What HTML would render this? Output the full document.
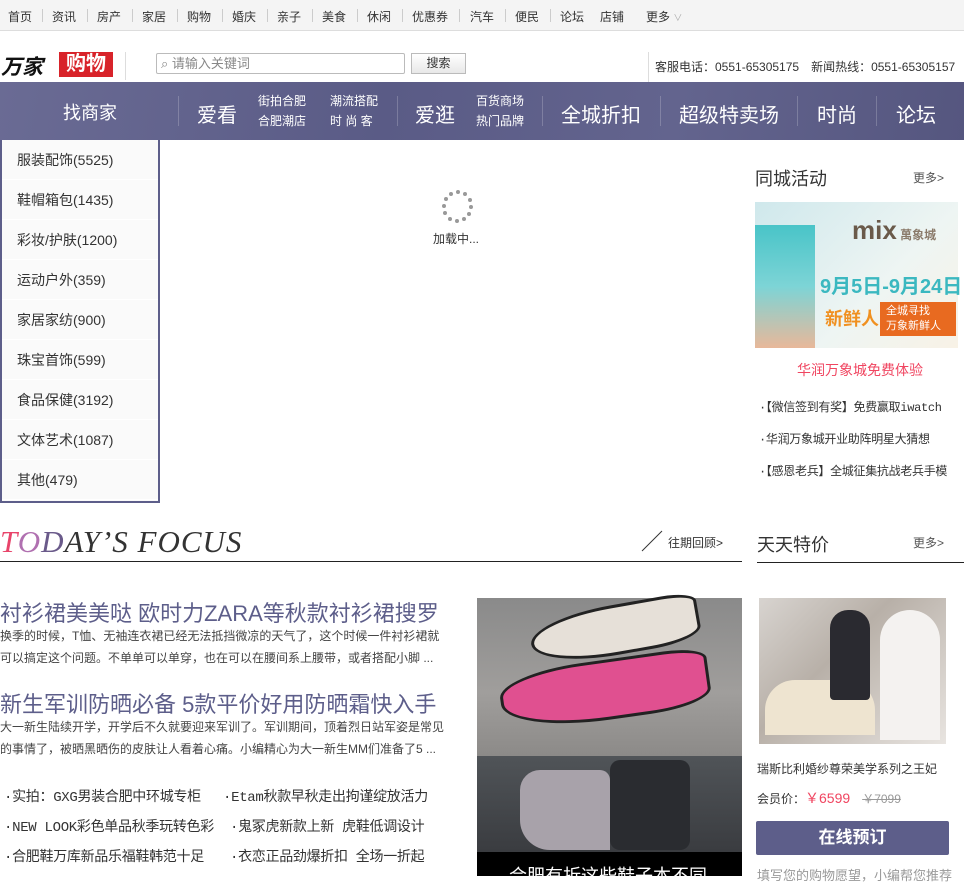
<!DOCTYPE html>
<html><head><meta charset="utf-8"><style>
*{margin:0;padding:0;box-sizing:border-box}
body{width:964px;height:876px;overflow:hidden;background:#fff;font-family:"Liberation Sans","Noto Sans CJK SC",sans-serif;color:#333;position:relative}
.a{position:absolute;white-space:nowrap}
.top{left:0;top:0;width:964px;height:31px;background:#f4f4f4;border-bottom:1px solid #ddd;font-size:12px;color:#333}
.top span{position:absolute;top:8px}
.sep{position:absolute;top:9px;width:1px;height:13px;background:#ccc}
.nav{left:0;top:82px;width:964px;height:58px;background:linear-gradient(100deg,#6a6b94 0%,#5a5b86 40%,#63648e 70%,#55567f 100%);color:#fff}
.nav .b{position:absolute;top:17px;font-size:20px}
.nav .s{position:absolute;font-size:12px;line-height:20px;top:9px}
.nav .d{position:absolute;top:14px;width:1px;height:30px;background:rgba(255,255,255,.2)}
.side{left:0;top:140px;width:160px;height:363px;border:2px solid #5d5e8a;border-top:none;background:#fafafa}
.side div{height:40px;line-height:40px;padding-left:15px;font-size:14px;color:#333;border-bottom:1px solid #fff}
.h1{font-size:22px;color:#5d5e8a}
.p{font-size:12px;color:#444;line-height:22px}
.li{font-size:14px;color:#333;font-family:"Liberation Mono","Noto Sans CJK SC",monospace;letter-spacing:-0.3px}
</style></head><body>
<div class="a top">
<span style="left:8px">首页</span><i class="sep" style="left:42px"></i>
<span style="left:52px">资讯</span><i class="sep" style="left:87px"></i>
<span style="left:97px">房产</span><i class="sep" style="left:132px"></i>
<span style="left:142px">家居</span><i class="sep" style="left:177px"></i>
<span style="left:187px">购物</span><i class="sep" style="left:222px"></i>
<span style="left:232px">婚庆</span><i class="sep" style="left:267px"></i>
<span style="left:277px">亲子</span><i class="sep" style="left:312px"></i>
<span style="left:322px">美食</span><i class="sep" style="left:357px"></i>
<span style="left:367px">休闲</span><i class="sep" style="left:402px"></i>
<span style="left:412px">优惠券</span><i class="sep" style="left:459px"></i>
<span style="left:470px">汽车</span><i class="sep" style="left:505px"></i>
<span style="left:515px">便民</span><i class="sep" style="left:550px"></i>
<span style="left:560px">论坛</span>
<span style="left:600px">店铺</span>
<span style="left:646px">更多 <small style="color:#aaa;font-size:9px">∨</small></span>
</div>
<div class="a" style="left:1px;top:51px;font-size:21px;font-weight:bold;font-style:italic;color:#111">万家</div>
<div class="a" style="left:59px;top:52px;width:54px;height:25px;background:#d8232a;color:#fff;font-size:20px;font-weight:bold;text-align:center;line-height:25px">购物</div>
<div class="a" style="left:125px;top:52px;width:1px;height:28px;background:#ddd"></div>
<div class="a" style="left:156px;top:53px;width:249px;height:21px;border:1px solid #bbb;border-radius:2px;font-size:13px;color:#888;line-height:19px;padding-left:4px">&#x2315; 请输入关键词</div>
<div class="a" style="left:411px;top:53px;width:55px;height:21px;border:1px solid #bbb;background:linear-gradient(#fff,#e8e8e8);font-size:12px;text-align:center;line-height:19px;color:#333">搜索</div>
<div class="a" style="left:648px;top:52px;width:1px;height:30px;background:#ddd"></div>
<div class="a" style="left:655px;top:58px;font-size:12px;color:#333">客服电话：0551-65305175　新闻热线：0551-65305157</div>
<div class="a nav">
<span class="b" style="left:63px;font-size:18px">找商家</span><i class="d" style="left:178px"></i>
<span class="b" style="left:197px">爱看</span>
<span class="s" style="left:258px">街拍合肥<br>合肥潮店</span>
<span class="s" style="left:330px">潮流搭配<br>时 尚 客</span><i class="d" style="left:397px"></i>
<span class="b" style="left:415px">爱逛</span>
<span class="s" style="left:476px">百货商场<br>热门品牌</span><i class="d" style="left:542px"></i>
<span class="b" style="left:561px">全城折扣</span><i class="d" style="left:660px"></i>
<span class="b" style="left:679px">超级特卖场</span><i class="d" style="left:797px"></i>
<span class="b" style="left:817px">时尚</span><i class="d" style="left:876px"></i>
<span class="b" style="left:896px">论坛</span>
</div>
<div class="a side">
<div>服装配饰(5525)</div><div>鞋帽箱包(1435)</div><div>彩妆/护肤(1200)</div><div>运动户外(359)</div><div>家居家纺(900)</div><div>珠宝首饰(599)</div><div>食品保健(3192)</div><div>文体艺术(1087)</div><div>其他(479)</div>
</div>
<svg class="a" style="left:440px;top:189px" width="36" height="36"><g fill="#999"><circle cx="18" cy="3" r="2"/><circle cx="25" cy="5" r="2"/><circle cx="30" cy="11" r="2"/><circle cx="31" cy="18" r="2"/><circle cx="29" cy="25" r="2"/><circle cx="24" cy="30" r="2"/><circle cx="17" cy="32" r="2"/><circle cx="10" cy="30" r="2"/><circle cx="5" cy="24" r="2"/><circle cx="4" cy="17" r="2"/><circle cx="6" cy="10" r="2"/><circle cx="11" cy="5" r="2"/></g></svg>
<div class="a" style="left:433px;top:230px;font-size:12px;color:#333">加载中...</div>

<div class="a" style="left:755px;top:165px;font-size:18px;color:#333">同城活动</div>
<div class="a" style="left:913px;top:169px;font-size:12px;color:#555">更多&gt;</div>
<div class="a" style="left:755px;top:202px;width:203px;height:146px;background:linear-gradient(135deg,#cfe8ec,#eef5f3 60%,#f8f2e6)"></div>
<div class="a" style="left:755px;top:225px;width:60px;height:123px;background:linear-gradient(#49c4c8,#7dd4d6 50%,#e8b89a)"></div>
<div class="a" style="left:852px;top:215px;font-size:26px;font-weight:bold;color:#6a5a4a">mix<span style="font-size:12px;color:#8a7a6a"> 萬象城</span></div>
<div class="a" style="left:820px;top:270px;font-size:20px;font-weight:bold;color:#3bb8c0">9月5日-9月24日</div>
<div class="a" style="left:880px;top:302px;width:76px;height:34px;background:#e86a20;color:#fff;font-size:11px;line-height:15px;padding:2px 6px">全城寻找<br>万象新鲜人</div>
<div class="a" style="left:825px;top:305px;font-size:18px;font-weight:bold;color:#f09020">新鲜人</div>
<div class="a" style="left:797px;top:360px;font-size:14px;color:#f04560">华润万象城免费体验</div>
<div class="a li" style="left:759px;top:398px;font-size:12px">·【微信签到有奖】免费赢取iwatch</div>
<div class="a li" style="left:759px;top:430px;font-size:12px">·华润万象城开业助阵明星大猜想</div>
<div class="a li" style="left:759px;top:462px;font-size:12px">·【感恩老兵】全城征集抗战老兵手模</div>

<div class="a" style="left:0;top:524px;font-family:'Liberation Serif',serif;font-style:italic;font-size:31px;color:#333;letter-spacing:1px"><span style="color:#e8446a">T</span><span style="color:#b070b0">O</span><span style="color:#6a5a8a">D</span>AY’S FOCUS</div>
<svg class="a" style="left:641px;top:530px" width="22" height="22"><line x1="1" y1="21" x2="21" y2="1" stroke="#333"/></svg>
<div class="a" style="left:668px;top:534px;font-size:12px;color:#333">往期回顾&gt;</div>
<div class="a" style="left:0;top:561px;width:742px;height:1px;background:#222"></div>
<div class="a" style="left:757px;top:531px;font-size:18px;color:#333">天天特价</div>
<div class="a" style="left:913px;top:534px;font-size:12px;color:#555">更多&gt;</div>
<div class="a" style="left:757px;top:562px;width:207px;height:1px;background:#222"></div>

<div class="a h1" style="left:0;top:596px">衬衫裙美美哒 欧时力ZARA等秋款衬衫裙搜罗</div>
<div class="a p" style="left:0;top:625px">换季的时候，T恤、无袖连衣裙已经无法抵挡微凉的天气了，这个时候一件衬衫裙就<br>可以搞定这个问题。不单单可以单穿，也在可以在腰间系上腰带，或者搭配小脚 ...</div>
<div class="a h1" style="left:0;top:687px">新生军训防晒必备 5款平价好用防晒霜快入手</div>
<div class="a p" style="left:0;top:716px">大一新生陆续开学，开学后不久就要迎来军训了。军训期间，顶着烈日站军姿是常见<br>的事情了，被晒黑晒伤的皮肤让人看着心痛。小编精心为大一新生MM们准备了5 ...</div>
<div class="a li" style="left:4px;top:786px">·实拍：GXG男装合肥中环城专柜</div>
<div class="a li" style="left:223px;top:786px">·Etam秋款早秋走出拘谨绽放活力</div>
<div class="a li" style="left:4px;top:816px">·NEW LOOK彩色单品秋季玩转色彩</div>
<div class="a li" style="left:230px;top:816px">·鬼冢虎新款上新 虎鞋低调设计</div>
<div class="a li" style="left:4px;top:846px">·合肥鞋万库新品乐福鞋韩范十足</div>
<div class="a li" style="left:230px;top:846px">·衣恋正品劲爆折扣 全场一折起</div>

<div class="a" style="left:477px;top:598px;width:265px;height:158px;background:linear-gradient(#8a8a8a,#a09e9c 60%,#8c8a88)"></div>
<div class="a" style="left:530px;top:605px;width:170px;height:50px;background:#e6e0d8;border:3px solid #222;border-radius:50% 20% 30% 50%;transform:rotate(-10deg)"></div>
<div class="a" style="left:500px;top:660px;width:210px;height:60px;background:#e05090;border:3px solid #222;border-radius:40% 20% 30% 50%;transform:rotate(-8deg)"></div>
<div class="a" style="left:477px;top:756px;width:265px;height:96px;background:linear-gradient(#505458,#3a3c40)"></div>
<div class="a" style="left:520px;top:770px;width:90px;height:80px;background:#a8a2aa;border-radius:20px 10px 0 30px"></div>
<div class="a" style="left:610px;top:760px;width:80px;height:90px;background:#2a2c30;border-radius:10px"></div>
<div class="a" style="left:477px;top:852px;width:265px;height:24px;background:#000;color:#fff;font-size:18px;padding:10px 0 0 32px">合肥有折这些鞋子本不同</div>

<div class="a" style="left:759px;top:598px;width:187px;height:146px;background:linear-gradient(135deg,#d8d4d0,#b8b0a8 40%,#e8e4e0)"></div>
<div class="a" style="left:765px;top:680px;width:110px;height:55px;background:#eee4d0;border-radius:30px 30px 0 0"></div>
<div class="a" style="left:830px;top:610px;width:40px;height:90px;background:#2a2a30;border-radius:18px 18px 4px 4px"></div>
<div class="a" style="left:880px;top:610px;width:60px;height:130px;background:#f4f2f0;border-radius:30px 30px 0 0"></div>
<div class="a" style="left:757px;top:760px;font-size:12px;color:#333">瑞斯比利婚纱尊荣美学系列之王妃</div>
<div class="a" style="left:757px;top:788px;font-size:12px;color:#333">会员价：<span style="color:#f04560;font-size:14px">￥6599</span>　<s style="color:#999">￥7099</s></div>
<div class="a" style="left:756px;top:821px;width:193px;height:34px;background:#5d5e8a;color:#fff;font-size:17px;font-weight:bold;text-align:center;line-height:34px;border-radius:2px">在线预订</div>
<div class="a" style="left:757px;top:865px;font-size:13px;color:#999">填写您的购物愿望，小编帮您推荐</div>
</body></html>
